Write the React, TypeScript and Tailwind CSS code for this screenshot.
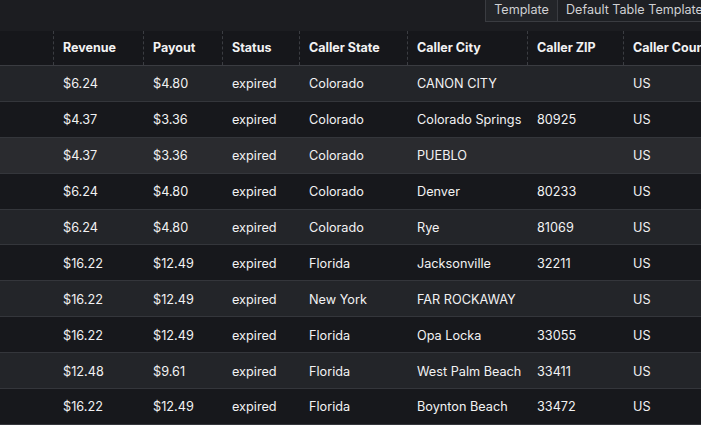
import React from "react";

interface Call {
  revenue: string;
  payout: string;
  status: string;
  state: string;
  city: string;
  zip: string;
  country: string;
}

const calls: Call[] = [
  { revenue: "$6.24", payout: "$4.80", status: "expired", state: "Colorado", city: "CANON CITY", zip: "", country: "US" },
  { revenue: "$4.37", payout: "$3.36", status: "expired", state: "Colorado", city: "Colorado Springs", zip: "80925", country: "US" },
  { revenue: "$4.37", payout: "$3.36", status: "expired", state: "Colorado", city: "PUEBLO", zip: "", country: "US" },
  { revenue: "$6.24", payout: "$4.80", status: "expired", state: "Colorado", city: "Denver", zip: "80233", country: "US" },
  { revenue: "$6.24", payout: "$4.80", status: "expired", state: "Colorado", city: "Rye", zip: "81069", country: "US" },
  { revenue: "$16.22", payout: "$12.49", status: "expired", state: "Florida", city: "Jacksonville", zip: "32211", country: "US" },
  { revenue: "$16.22", payout: "$12.49", status: "expired", state: "New York", city: "FAR ROCKAWAY", zip: "", country: "US" },
  { revenue: "$16.22", payout: "$12.49", status: "expired", state: "Florida", city: "Opa Locka", zip: "33055", country: "US" },
  { revenue: "$12.48", payout: "$9.61", status: "expired", state: "Florida", city: "West Palm Beach", zip: "33411", country: "US" },
  { revenue: "$16.22", payout: "$12.49", status: "expired", state: "Florida", city: "Boynton Beach", zip: "33472", country: "US" },
];

const cols = [
  { label: "Revenue", w: "w-[90px]" },
  { label: "Payout", w: "w-[79px]" },
  { label: "Status", w: "w-[77px]" },
  { label: "Caller State", w: "w-[108px]" },
  { label: "Caller City", w: "w-[120px]" },
  { label: "Caller ZIP", w: "w-[96px]" },
  { label: "Caller Country", w: "w-[120px]" },
];

const App: React.FC = () => {
  return (
    <div
      className="w-[701px] h-[425px] overflow-hidden bg-[#17181c] text-[#f2f2f3]"
      style={{ fontFamily: "Inter, 'Noto Sans', sans-serif" }}
    >
      {/* toolbar */}
      <div className="h-[31px] bg-[#1c1d21] flex overflow-hidden">
        <div className="ml-[485px] shrink-0 h-[22px] flex items-center border-l border-b border-[#3a3c41] bg-[#232529] text-[12.6px] text-[#cfd0d3] whitespace-nowrap">
          <span className="w-[72px] h-full flex items-center justify-center border-r border-[#3a3c41]">Template</span>
          <span className="pl-[8px] pr-3 h-full flex items-center bg-[#1e2024]">Default Table Template</span>
        </div>
      </div>

      {/* header */}
      <div className="flex h-[35px] bg-[#16171b] border-b border-[#3a3c41] whitespace-nowrap">
        <div className="w-[54px] shrink-0 border-r border-dashed border-[#3b3d42]" />
        {cols.map((c, i) => (
          <div
            key={c.label}
            className={`${c.w} shrink-0 flex items-center pl-[9px] text-[12.5px] font-bold ${i < cols.length - 1 ? "border-r border-dashed border-[#3b3d42]" : ""}`}
          >
            {c.label}
          </div>
        ))}
      </div>

      {/* rows */}
      {calls.map((r, i) => (
        <div
          key={i}
          className={`flex h-[35.9px] pt-[1px] border-b border-[#34363b] whitespace-nowrap text-[12.7px] ${i % 2 === 0 ? (i === 2 ? "bg-[#2a2b2f]" : "bg-[#232529]") : "bg-[#17181c]"}`}
        >
          <div className="w-[54px] shrink-0" />
          {[r.revenue, r.payout, r.status, r.state, r.city, r.zip, r.country].map((v, j) => (
            <div key={j} className={`${cols[j].w} shrink-0 flex items-center pl-[9px]`}>
              {v}
            </div>
          ))}
        </div>
      ))}
    </div>
  );
};

export default App;
